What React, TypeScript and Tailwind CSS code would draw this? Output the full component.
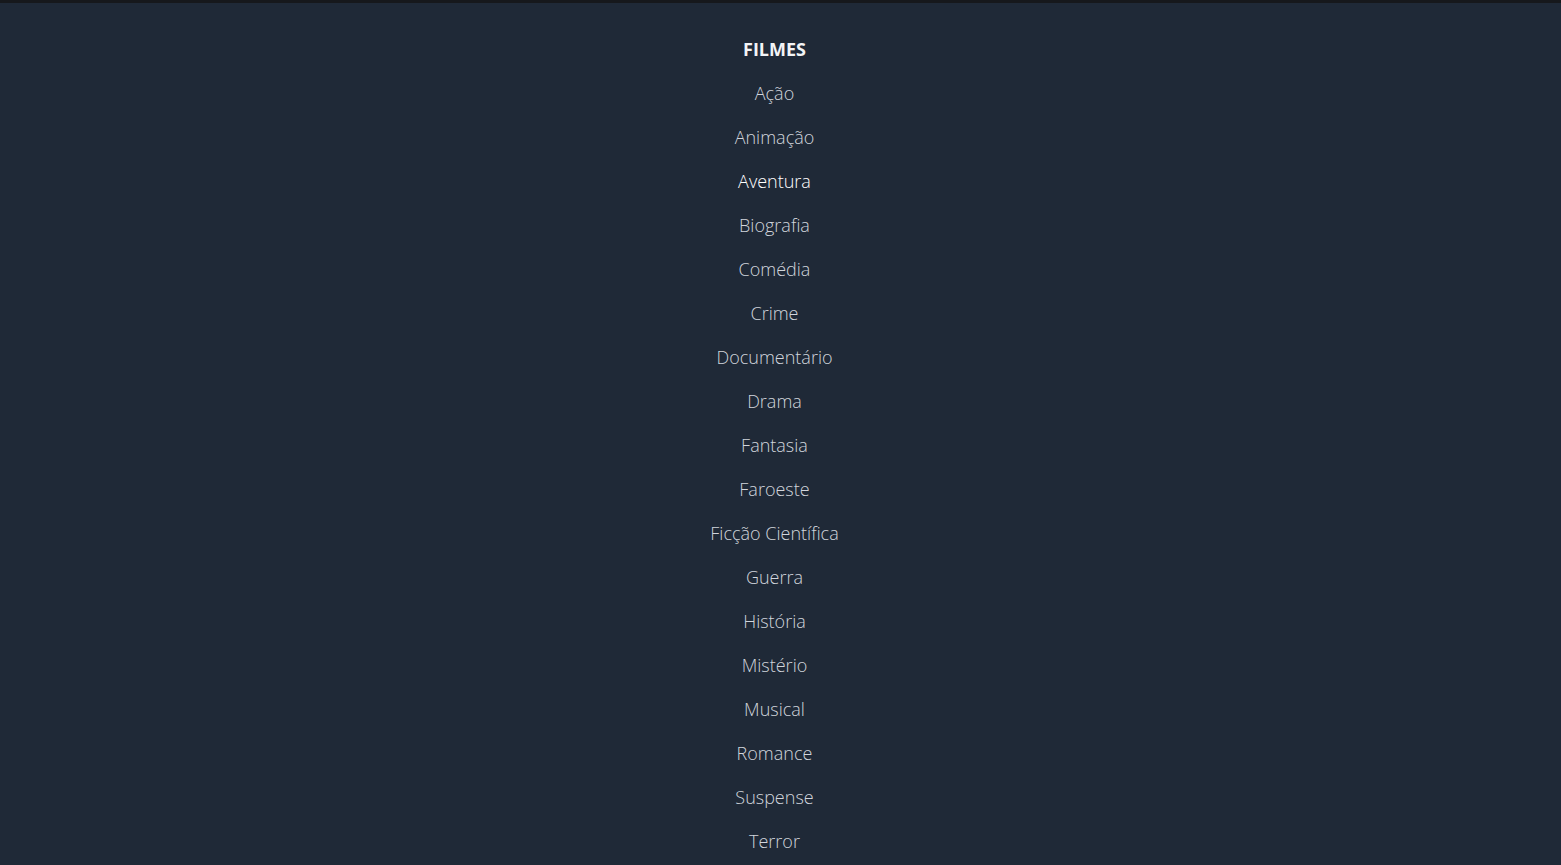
import React from "react";

const items = [
  "Ação",
  "Animação",
  "Aventura",
  "Biografia",
  "Comédia",
  "Crime",
  "Documentário",
  "Drama",
  "Fantasia",
  "Faroeste",
  "Ficção Científica",
  "Guerra",
  "História",
  "Mistério",
  "Musical",
  "Romance",
  "Suspense",
  "Terror",
];

export default function App() {
  return (
    <div
      className="min-h-screen bg-[#1f2937] border-t-[3px] border-[#16181c] pr-[12px]"
      style={{ fontFamily: '"Open Sans", "Noto Sans", sans-serif' }}
    >
      <div className="flex flex-col items-center pt-[32px]">
        <h2 className="text-lg leading-7 font-bold text-gray-100 h-[28px]">FILMES</h2>
        <ul className="flex flex-col items-center">
          {items.map((it) => (
            <li key={it} className="pt-[16px]">
              <a
                className={`text-lg leading-7 font-light block ${
                  it === "Aventura" ? "text-white" : "text-gray-300"
                }`}
              >
                {it}
              </a>
            </li>
          ))}
        </ul>
      </div>
    </div>
  );
}
